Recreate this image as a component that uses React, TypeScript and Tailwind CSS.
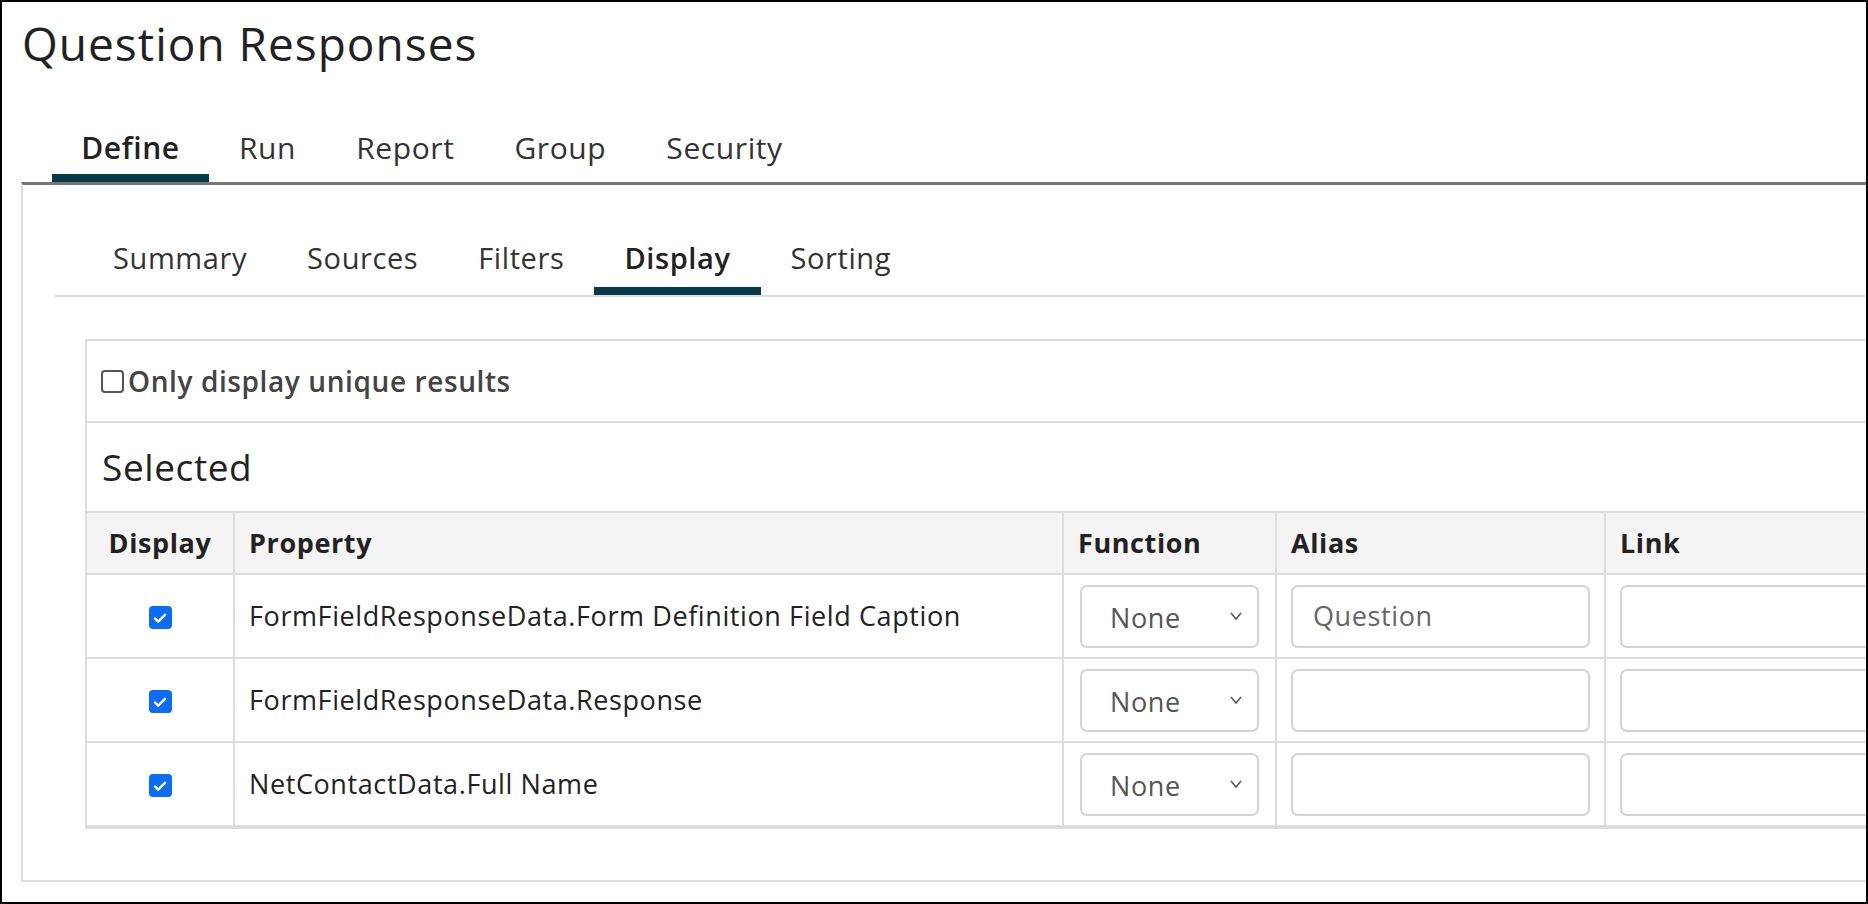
import React from "react";

const font = { fontFamily: '"Open Sans", "Liberation Sans", sans-serif' };

function Check() {
  return (
    <span className="inline-flex w-[23px] h-[23px] rounded-[4px] bg-[#0b6cf5] items-center justify-center">
      <svg width="16" height="16" viewBox="0 0 16 16"><path d="M3 8.5l3.2 3.2L13 4.8" fill="none" stroke="white" strokeWidth="2.4" strokeLinecap="round" strokeLinejoin="round" /></svg>
    </span>
  );
}

function Sel() {
  return (
    <div className="w-[179px] h-[63px] border-2 border-[#d4d4d4] rounded-[7px] flex items-center justify-between pl-[28px] pr-[14px] text-[#555] text-[27px]">
      <span className="mt-[4px]">None</span>
      <svg width="14" height="10" viewBox="0 0 14 10"><path d="M2 2l5 6 5-6" fill="none" stroke="#555" strokeWidth="1.5" /></svg>
    </div>
  );
}

function Inp({ v }: { v?: string }) {
  return (
    <div className="h-[63px] border-2 border-[#d4d4d4] rounded-[7px] flex items-center px-[20px] text-[#666] text-[27px]">{v}</div>
  );
}

const rows = [
  { p: "FormFieldResponseData.Form Definition Field Caption", a: "Question" },
  { p: "FormFieldResponseData.Response", a: "" },
  { p: "NetContactData.Full Name", a: "" },
];

export default function App() {
  return (
    <div style={font} className="w-[1868px] h-[904px] overflow-hidden border-2 border-black bg-white text-[#222] relative tracking-[0.6px]">
      <div className="pl-[20px] pt-[12px] text-[46px] leading-[58px] tracking-[1px]">Question Responses</div>
      <div className="flex ml-[50px] mt-[56px] text-[30px]">
        <div className="w-[157px] flex flex-col items-center">
          <span className="font-semibold leading-[40px]">Define</span>
          <div className="w-full h-[8px] bg-[#063a4a] mt-[6px]" />
        </div>
        {["Run", "Report", "Group", "Security"].map((t) => (
          <div key={t} className="px-[30px] leading-[40px] text-[#333]">{t}</div>
        ))}
      </div>
      <div className="ml-[19px] border-t-[3px] border-[#777] border-l-2 border-l-[#ddd] border-b-2 border-b-[#ddd] h-[700px]">
        <div className="ml-[32px] mt-[54px] border-b-2 border-[#ddd] flex text-[29px] pl-[28px]">
          {["Summary", "Sources", "Filters", "Display", "Sorting"].map((t) => (
            <div key={t} className="flex flex-col items-center px-[30px]">
              <span className={"leading-[38px] " + (t === "Display" ? "font-semibold" : "text-[#333]")}>{t}</span>
              <div className={"h-[8px] w-[calc(100%+60px)] mt-[10px] " + (t === "Display" ? "bg-[#063a4a]" : "")} />
            </div>
          ))}
        </div>
        <div className="ml-[62px] mt-[42px] border-2 border-[#ddd] border-r-0">
          <div className="h-[82px] flex items-center pl-[14px] border-b-2 border-[#ddd] gap-[4px]">
            <span className="w-[23px] h-[23px] border-2 border-[#555] rounded-[4px] bg-white" />
            <span className="text-[28px] font-semibold text-[#444]">Only display unique results</span>
          </div>
          <div className="h-[88px] flex items-center pl-[15px] text-[37px]">Selected</div>
          <table className="border-collapse text-[27px] w-[1900px]">
            <thead>
              <tr className="bg-[#f4f4f4] h-[62px] text-left">
                <th className="w-[147px] border-2 border-l-0 border-[#ddd] text-center font-bold">Display</th>
                <th className="w-[829px] border-2 border-[#ddd] pl-[14px] font-bold">Property</th>
                <th className="w-[210px] border-2 border-[#ddd] pl-[14px] font-bold">Function</th>
                <th className="w-[329px] border-2 border-[#ddd] pl-[14px] font-bold">Alias</th>
                <th className="border-2 border-[#ddd] pl-[14px] font-bold">Link</th>
              </tr>
            </thead>
            <tbody>
              {rows.map((r) => (
                <tr key={r.p} className="h-[84px]">
                  <td className="border-2 border-l-0 border-[#ddd] text-center align-middle"><Check /></td>
                  <td className="border-2 border-[#ddd] pl-[14px] whitespace-nowrap">{r.p}</td>
                  <td className="border-2 border-[#ddd] px-[16px]"><Sel /></td>
                  <td className="border-2 border-[#ddd] px-[14px]"><Inp v={r.a} /></td>
                  <td className="border-2 border-[#ddd] px-[14px]"><Inp /></td>
                </tr>
              ))}
            </tbody>
          </table>
        </div>
      </div>
    </div>
  );
}
